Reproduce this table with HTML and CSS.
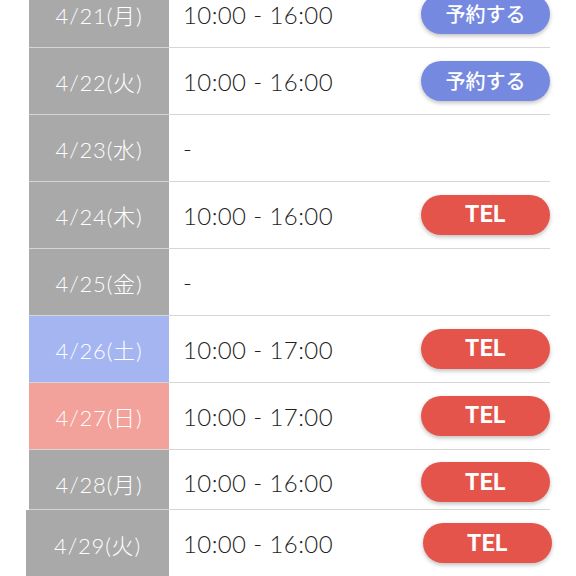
FILE: index.html
```html
<!DOCTYPE html>
<html lang="ja">
<head>
<meta charset="utf-8">
<title>営業日カレンダー</title>
<link rel="stylesheet" href="styles.css">
</head>
<body>
<div class="schedule">
  <div class="row">
    <div class="date">4/21(月)</div>
    <div class="info"><span class="time">10:00 - 16:00</span><a class="btn btn--reserve">予約する</a></div>
  </div>
  <div class="row">
    <div class="date">4/22(火)</div>
    <div class="info"><span class="time">10:00 - 16:00</span><a class="btn btn--reserve">予約する</a></div>
  </div>
  <div class="row">
    <div class="date">4/23(水)</div>
    <div class="info"><span class="time">-</span></div>
  </div>
  <div class="row">
    <div class="date">4/24(木)</div>
    <div class="info"><span class="time">10:00 - 16:00</span><a class="btn btn--tel">TEL</a></div>
  </div>
  <div class="row">
    <div class="date">4/25(金)</div>
    <div class="info"><span class="time">-</span></div>
  </div>
  <div class="row">
    <div class="date date--sat">4/26(土)</div>
    <div class="info"><span class="time">10:00 - 17:00</span><a class="btn btn--tel">TEL</a></div>
  </div>
  <div class="row">
    <div class="date date--sun">4/27(日)</div>
    <div class="info"><span class="time">10:00 - 17:00</span><a class="btn btn--tel">TEL</a></div>
  </div>
  <div class="row row--short">
    <div class="date">4/28(月)</div>
    <div class="info"><span class="time">10:00 - 16:00</span><a class="btn btn--tel">TEL</a></div>
  </div>
  <div class="row row--wide">
    <div class="date">4/29(火)</div>
    <div class="info"><span class="time">10:00 - 16:00</span><a class="btn btn--tel">TEL</a></div>
  </div>
</div>
</body>
</html>
```

FILE: styles.css
```css
html, body {
  margin: 0;
  padding: 0;
  background: #fff;
}

body {
  font-family: Lato, "Noto Sans CJK JP", sans-serif;
  font-weight: 300;
  overflow: hidden;
}

.schedule {
  margin: -19px 26px 0 29px;
  display: flex;
  flex-direction: column;
}

.row {
  display: grid;
  grid-template-columns: 140px 1fr;
  column-gap: 1px;
  height: 67px;
  box-sizing: border-box;
  border-bottom: 1px solid #d6d6d6;
}

.row--short {
  height: 60px;
}

.row--short .date,
.row--short .info {
  padding-top: 6px;
}

.row--wide {
  grid-template-columns: 143px 1fr;
  margin-left: -3px;
  margin-right: -2px;
  height: 68px;
}

.date {
  background: #a9a9a9;
  color: #fff;
  font-size: 22px;
  letter-spacing: 0.8px;
  display: flex;
  align-items: center;
  justify-content: center;
}

.date--sat {
  background: #a4b5f2;
}

.date--sun {
  background: #f2a19b;
}

.info {
  display: flex;
  align-items: center;
  justify-content: space-between;
  padding-left: 13px;
}

.time {
  color: #222;
  font-size: 24px;
  letter-spacing: 0.4px;
}

.btn {
  width: 129px;
  height: 40px;
  border-radius: 20px;
  display: flex;
  align-items: center;
  justify-content: center;
  color: #fff;
  box-shadow: 0 2px 4px rgba(0, 0, 0, 0.25);
  margin-bottom: 1px;
}

.btn--reserve {
  background: #7589e1;
  font-family: "Noto Sans CJK JP", sans-serif;
  font-size: 20px;
  font-weight: 500;
}

.btn--tel {
  background: #e5544b;
  font-family: Roboto, sans-serif;
  font-size: 23px;
  font-weight: 700;
  letter-spacing: 0.5px;
}
```
